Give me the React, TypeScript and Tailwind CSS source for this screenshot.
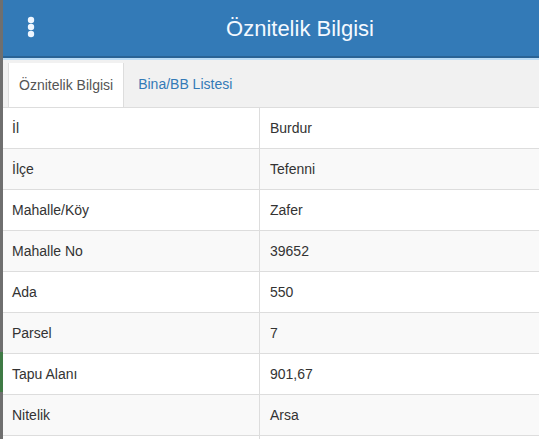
import React from "react";

const rows = [
  ["İl", "Burdur"],
  ["İlçe", "Tefenni"],
  ["Mahalle/Köy", "Zafer"],
  ["Mahalle No", "39652"],
  ["Ada", "550"],
  ["Parsel", "7"],
  ["Tapu Alanı", "901,67"],
  ["Nitelik", "Arsa"],
  ["", ""],
];

const App = () => {
  return (
    <div className="flex h-[439px] w-[539px] overflow-hidden bg-white font-['Liberation_Sans',Arial,sans-serif]">
      {/* page edge behind the panel */}
      <div className="flex w-[3px] shrink-0 flex-col bg-[#6f6f6f]">
        <div className="h-[352px]" />
        <div className="h-[40px] bg-[#3f7a45]" />
      </div>

      <div className="flex min-w-0 flex-1 flex-col">
        {/* Header */}
        <div className="relative flex h-[58px] shrink-0 items-center justify-center border-b-2 border-[#2a6395] bg-[#337ab7] pl-[58px]">
          <button className="absolute left-[24px] top-[16px] flex h-[22px] w-[8px] items-center justify-center">
            <svg width="8" height="22" viewBox="0 0 8 22" fill="#eef6ff">
              <circle cx="4" cy="4" r="3.2" />
              <circle cx="4" cy="11" r="3.2" />
              <circle cx="4" cy="18" r="3.2" />
            </svg>
          </button>
          <h1 className="text-[22px] text-[#f4f9ff]">Öznitelik Bilgisi</h1>
        </div>

        {/* Tabs */}
        <div className="flex h-[49px] shrink-0 items-end border-t-2 border-[#bcdcf5] bg-[#f1f1f1] pl-[5px]">
          <div className="-mb-px flex h-[45px] items-center border-x border-[#ddd] bg-white px-[10px] text-[14px] text-[#555]">
            Öznitelik Bilgisi
          </div>
          <div className="flex h-[45px] items-center px-[14px] text-[14px] text-[#337ab7]">
            Bina/BB Listesi
          </div>
        </div>

        {/* Table */}
        <div className="flex flex-col border-t border-[#ddd]">
          {rows.map(([k, v], i) => (
            <div
              key={i}
              className={`flex h-[41px] shrink-0 border-b border-[#ddd] text-[14px] text-[#333] ${
                i % 2 === 1 ? "bg-[#f9f9f9]" : "bg-white"
              }`}
            >
              <div className="flex w-[257px] items-center border-r border-[#ddd] px-[9px]">{k}</div>
              <div className="flex flex-1 items-center px-[10px]">{v}</div>
            </div>
          ))}
        </div>
      </div>
    </div>
  );
};

export default App;
